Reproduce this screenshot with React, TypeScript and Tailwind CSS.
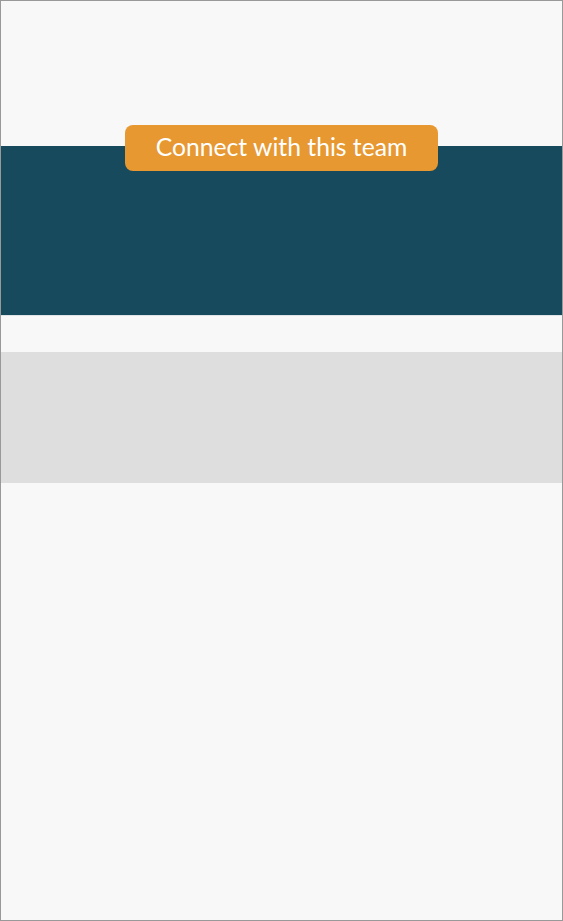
export default function App() {
  return (
    <div
      className="w-[563px] h-[921px] border border-[#999999] bg-[#f8f8f8] overflow-hidden"
      style={{ fontFamily: "Lato, 'Open Sans', sans-serif" }}
    >
      <div className="pt-[124px] flex justify-center relative z-10">
        <button className="w-[313px] h-[46px] rounded-[8px] bg-[#e79830] text-white text-[24.7px] leading-none pb-[2px]">
          Connect with this team
        </button>
      </div>
      <div className="-mt-[25px] h-[169px] bg-[#174a5d]" />
      <div className="h-[1px] bg-[#dfe4e6]" />
      <div className="h-[36px]" />
      <div className="h-[131px] bg-[#dedede]" />
    </div>
  );
}
